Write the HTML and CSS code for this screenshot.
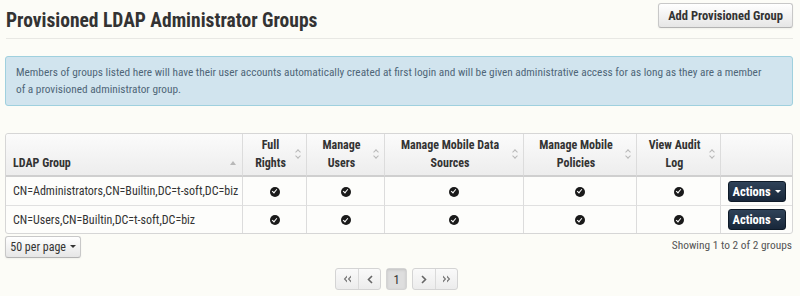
FILE: index.html
```html
<!DOCTYPE html>
<html>
<head>
<meta charset="utf-8">
<link rel="stylesheet" href="styles.css">
</head>
<body>
<div class="page">
  <div class="header">
    <h1 class="title">Provisioned LDAP Administrator Groups</h1>
    <button class="btn btn-default btn-add">Add Provisioned Group</button>
  </div>
  <div class="alert">Members of groups listed here will have their user accounts automatically created at first login and will be given administrative access for as long as they are a member of a provisioned administrator group.</div>

  <table class="grid">
    <colgroup>
      <col class="c-ldap"><col class="c-full"><col class="c-users"><col class="c-data"><col class="c-pol"><col class="c-audit"><col>
    </colgroup>
    <thead>
      <tr>
        <th class="left"><span class="th-in">LDAP Group<span class="sort-up"></span></span></th>
        <th><span class="th-in">Full<br>Rights<span class="sort"></span></span></th>
        <th><span class="th-in">Manage<br>Users<span class="sort"></span></span></th>
        <th><span class="th-in">Manage Mobile Data<br>Sources<span class="sort"></span></span></th>
        <th><span class="th-in">Manage Mobile<br>Policies<span class="sort"></span></span></th>
        <th><span class="th-in">View Audit<br>Log<span class="sort"></span></span></th>
        <th></th>
      </tr>
    </thead>
    <tbody>
      <tr>
        <td class="left">CN=Administrators,CN=Builtin,DC=t-soft,DC=biz</td>
        <td><span class="chk"></span></td><td><span class="chk"></span></td><td><span class="chk"></span></td><td><span class="chk"></span></td><td><span class="chk"></span></td>
        <td><button class="btn-actions">Actions <span class="caret"></span></button></td>
      </tr>
      <tr>
        <td class="left">CN=Users,CN=Builtin,DC=t-soft,DC=biz</td>
        <td><span class="chk"></span></td><td><span class="chk"></span></td><td><span class="chk"></span></td><td><span class="chk"></span></td><td><span class="chk"></span></td>
        <td><button class="btn-actions">Actions <span class="caret"></span></button></td>
      </tr>
    </tbody>
  </table>

  <div class="footer">
    <button class="btn btn-default btn-pp">50 per page <span class="caret dark"></span></button>
    <div class="showing">Showing 1 to 2 of 2 groups</div>
  </div>

  <div class="pager">
    <div class="pg-group">
      <span class="pg">
        <svg width="9" height="8" viewBox="0 0 9 8"><path d="M4 0.5 L0.8 4 L4 7.5 L4 5.6 L2.4 4 L4 2.4Z M8 0.5 L4.8 4 L8 7.5 L8 5.6 L6.4 4 L8 2.4Z" fill="#777"/></svg>
      </span>
      <span class="pg">
        <svg width="6" height="9" viewBox="0 0 6 9"><path d="M5 1 L1.5 4.5 L5 8" fill="none" stroke="#666" stroke-width="1.6"/></svg>
      </span>
    </div>
    <div class="pg-group"><span class="pg active">1</span></div>
    <div class="pg-group">
      <span class="pg">
        <svg width="6" height="9" viewBox="0 0 6 9"><path d="M1 1 L4.5 4.5 L1 8" fill="none" stroke="#666" stroke-width="1.6"/></svg>
      </span>
      <span class="pg">
        <svg width="9" height="8" viewBox="0 0 9 8"><path d="M1 0.5 L4.2 4 L1 7.5 L1 5.6 L2.6 4 L1 2.4Z M5 0.5 L8.2 4 L5 7.5 L5 5.6 L6.6 4 L5 2.4Z" fill="#777"/></svg>
      </span>
    </div>
  </div>
</div>
</body>
</html>
```

FILE: styles.css
```css
* { box-sizing: border-box; }
html, body { margin: 0; padding: 0; }
body {
  background: #fcfcf7;
  font-family: Roboto, "Liberation Sans", Arial, sans-serif;
  font-stretch: 75%;
  font-size: 12px;
  color: #333;
  width: 800px;
  height: 296px;
  overflow: hidden;
}
button { font-stretch: 75%; }
.page { padding: 3px 7px 0 5px; }
.header {
  display: flex;
  justify-content: space-between;
  align-items: flex-start;
  border-bottom: 1px solid #e8e8e4;
  margin-left: 1px;
  height: 36px;
}
.title {
  margin: 7px 0 0 0;
  font-size: 19.5px;
  font-weight: bold;
  color: #333;
  line-height: 22px;
}
.btn {
  font-family: inherit;
  cursor: pointer;
  white-space: nowrap;
}
.btn-default {
  background: linear-gradient(#ffffff, #e6e6e6);
  border: 1px solid #c8c8c8;
  border-bottom-color: #b3b3b3;
  border-radius: 3px;
  color: #333;
  box-shadow: 0 1px 2px rgba(0,0,0,.05);
}
.btn-add {
  height: 25px;
  width: 135px;
  padding: 0;
  font-size: 12.5px;
  font-weight: bold;
}
.alert {
  margin-top: 17px;
  background: #d1e4ee;
  border: 1px solid #9fd0de;
  border-radius: 3px;
  color: #4f6678;
  padding: 7px 20px 7px 10px;
  line-height: 17px;
  font-size: 11.3px;
}
.grid {
  margin-top: 27px;
  width: 788px;
  border-collapse: separate;
  border-spacing: 0;
  border: 1px solid #d6d6d6;
  border-radius: 3px;
  table-layout: fixed;
  background: #fdfdfb;
}
.c-ldap { width: 236px; }
.c-full { width: 64px; }
.c-users { width: 78px; }
.c-data { width: 139px; }
.c-pol { width: 113px; }
.c-audit { width: 84px; }
.grid th {
  background: linear-gradient(#fbfbfb, #ededed);
  font-weight: bold;
  font-size: 12px;
  line-height: 18px;
  height: 41px;
  padding: 2px 14px 3px 6px;
  text-align: center;
  vertical-align: bottom;
  border-bottom: 2px solid #cfcfcf;
  border-left: 1px solid #dcdcdc;
  position: relative;
}
.grid th:first-child { border-left: none; border-top-left-radius: 3px; padding-left: 7px; padding-bottom: 3px; }
.grid th:last-child { border-top-right-radius: 3px; }
.grid th.left { text-align: left; }
.th-in { display: block; }
.sort {
  position: absolute;
  right: 5px;
  top: 15px;
  width: 6px;
  height: 9px;
}
.sort::before, .sort::after {
  content: "";
  position: absolute;
  left: 1px;
  width: 3px; height: 3px;
  border: 1px solid #b8b8b8;
  border-right: none; border-bottom: none;
}
.sort::before { top: 1px; transform: rotate(45deg); }
.sort::after { top: 5px; transform: rotate(225deg); }
.sort-up {
  position: absolute;
  right: 6px;
  bottom: 10px;
  width: 0; height: 0;
  border-left: 3px solid transparent;
  border-right: 3px solid transparent;
  border-bottom: 4px solid #b8b8b8;
}
.grid td {
  height: 28px;
  padding: 0 6px;
  text-align: center;
  vertical-align: middle;
  border-left: 1px solid #dcdcdc;
  border-top: 1px solid #e0e0e0;
  font-size: 12px;
  white-space: nowrap;
}
.grid tbody tr:first-child td { border-top: none; }
.grid td:first-child { border-left: none; }
.grid td.left { text-align: left; padding-left: 7px; }
.chk {
  display: inline-block;
  width: 10px; height: 10px;
  border-radius: 50%;
  background: #1a1a1a;
  position: relative;
  vertical-align: middle;
}
.chk::after {
  content: "";
  position: absolute;
  left: 3px; top: 1.6px;
  width: 2px; height: 4px;
  border: solid #fff;
  border-width: 0 1.5px 1.5px 0;
  transform: rotate(40deg);
}
.btn-actions {
  font-family: inherit;
  background: linear-gradient(#2f4258, #18273a);
  border: 1px solid #0e1a28;
  border-radius: 3px;
  color: #fff;
  font-weight: bold;
  font-size: 12.5px;
  height: 21px;
  width: 58px;
  padding: 0;
  white-space: nowrap;
}
.caret {
  display: inline-block;
  width: 0; height: 0;
  vertical-align: middle;
  border-left: 3px solid transparent;
  border-right: 3px solid transparent;
  border-top: 3px solid #fff;
  margin-left: 1px;
  margin-top: -2px;
}
.caret.dark { border-top-color: #333; }
.footer {
  display: flex;
  justify-content: space-between;
  align-items: flex-start;
  margin-top: 2px;
}
.btn-pp {
  height: 22px;
  width: 76px;
  padding: 0;
  font-size: 12px;
}
.showing {
  color: #555;
  font-size: 11.4px;
  padding-top: 2px;
  padding-right: 1px;
}
.pager {
  display: flex;
  justify-content: center;
  gap: 5px;
  margin-top: 10px;
  padding-right: 5px;
}
.pg-group {
  display: flex;
  border: 1px solid #d4d4d4;
  border-radius: 3px;
  background: linear-gradient(#fafafa, #ececec);
  height: 22px;
}
.pg {
  width: 22px;
  height: 20px;
  display: flex;
  align-items: center;
  justify-content: center;
  border-left: 1px solid #dadada;
}
.pg:first-child { border-left: none; }
.pg.active {
  width: 19px;
  background: #dedede;
  font-size: 12.5px;
  color: #333;
  box-shadow: inset 0 1px 3px rgba(0,0,0,.12);
}
```
